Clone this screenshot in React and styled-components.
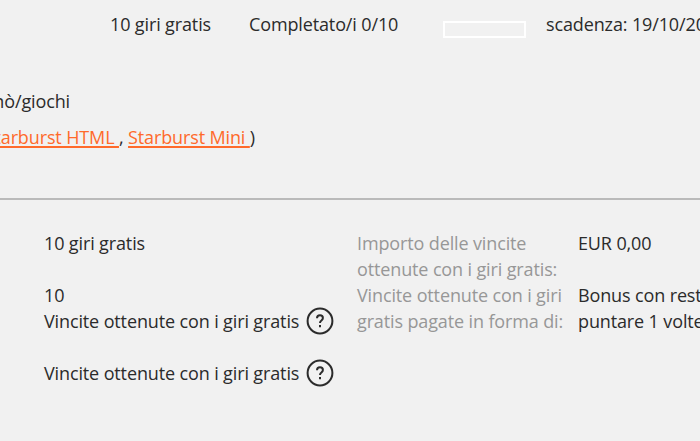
import styled, { createGlobalStyle } from "styled-components";

const HelpIcon = () => (
  <HelpSvg viewBox="0 0 28 28" aria-hidden="true">
    <circle cx="14" cy="14" r="12.4" />
    <path d="M11 11.3c0-1.9 1.3-3 3-3s2.9 1.1 2.9 2.7c0 2.5-2.9 2.4-2.9 4.9" />
    <path d="M14 18.1v2.2" />
  </HelpSvg>
);

const App = () => {
  return (
    <>
      <GlobalStyle />
      <Page>
        <Summary>
          <Spins>10 giri gratis</Spins>
          <Completed>Completato/i 0/10</Completed>
          <Progress />
          <Expiry>scadenza: 19/10/20</Expiry>
        </Summary>
        <Games>
          <GamesTitle>nò/giochi</GamesTitle>
          <GamesList>
            <span>
              <GameLink href="#">tarburst HTML&nbsp;</GameLink>,{" "}
              <GameLink href="#">Starburst Mini&nbsp;</GameLink>)
            </span>
          </GamesList>
        </Games>
        <Details>
          <Column>
            <Value>10 giri gratis</Value>
            <Value>10</Value>
            <Value>
              Vincite ottenute con i giri gratis
              <HelpIcon />
            </Value>
            <Value>
              Vincite ottenute con i giri gratis
              <HelpIcon />
            </Value>
          </Column>
          <Labels>
            <p>
              Importo delle vincite
              <br />
              ottenute con i giri gratis:
            </p>
            <p>
              Vincite ottenute con i giri
              <br />
              gratis pagate in forma di:
            </p>
          </Labels>
          <Amounts>
            <p>EUR 0,00</p>
            <p>
              Bonus con rest
              <br />
              puntare 1 volte
            </p>
          </Amounts>
        </Details>
      </Page>
    </>
  );
};

export default App;

const GlobalStyle = createGlobalStyle`
  * {
    box-sizing: border-box;
  }

  body {
    margin: 0;
    background-color: #f1f1f1;
  }

  p {
    margin: 0;
  }
`;

const Page = styled.main`
  width: 700px;
  height: 441px;
  overflow: hidden;
  background-color: #f1f1f1;
  color: #2b2b2b;
  font-family: "Open Sans", sans-serif;
  font-size: 18px;
  line-height: 26px;
  letter-spacing: -0.13px;
  white-space: nowrap;
`;

const Summary = styled.header`
  display: flex;
  height: 88px;
  padding: 11px 0 0 110px;
`;

const Spins = styled.span`
  flex: none;
  width: 139px;
`;

const Completed = styled.span`
  flex: none;
  width: 194px;
`;

const Progress = styled.div`
  flex: none;
  width: 83px;
  height: 17px;
  margin: 10px 20px 0 0;
  border: 2px solid #fff;
`;

const Expiry = styled.span`
  flex: none;
`;

const Games = styled.section`
  height: 112px;
  border-bottom: 2px solid #bababa;
`;

const GamesTitle = styled.p`
  display: flex;
  justify-content: flex-end;
  width: 70px;
  margin-bottom: 10px;
`;

const GamesList = styled.p`
  display: flex;
  justify-content: flex-end;
  width: 255px;
`;

const GameLink = styled.a`
  color: #ff6a2b;
  text-decoration: underline;
  text-decoration-thickness: 1.5px;
  text-underline-offset: 2px;
`;

const Details = styled.section`
  display: grid;
  grid-template-columns: 313px 221px 1fr;
  padding: 30px 0 0 44px;
`;

const Column = styled.div`
  display: grid;
  grid-template-rows: 52px 26px 52px 27px;
  align-items: start;
`;

const Value = styled.div`
  display: flex;
  align-items: center;
  gap: 7px;
  height: 26px;
`;

const Labels = styled.div`
  color: #979797;
`;

const Amounts = styled.div`
  display: grid;
  grid-template-rows: 52px 52px;
`;

const HelpSvg = styled.svg`
  flex: none;
  width: 28px;
  height: 28px;
  fill: none;
  stroke: #2b2b2b;
  stroke-width: 2;
`;
